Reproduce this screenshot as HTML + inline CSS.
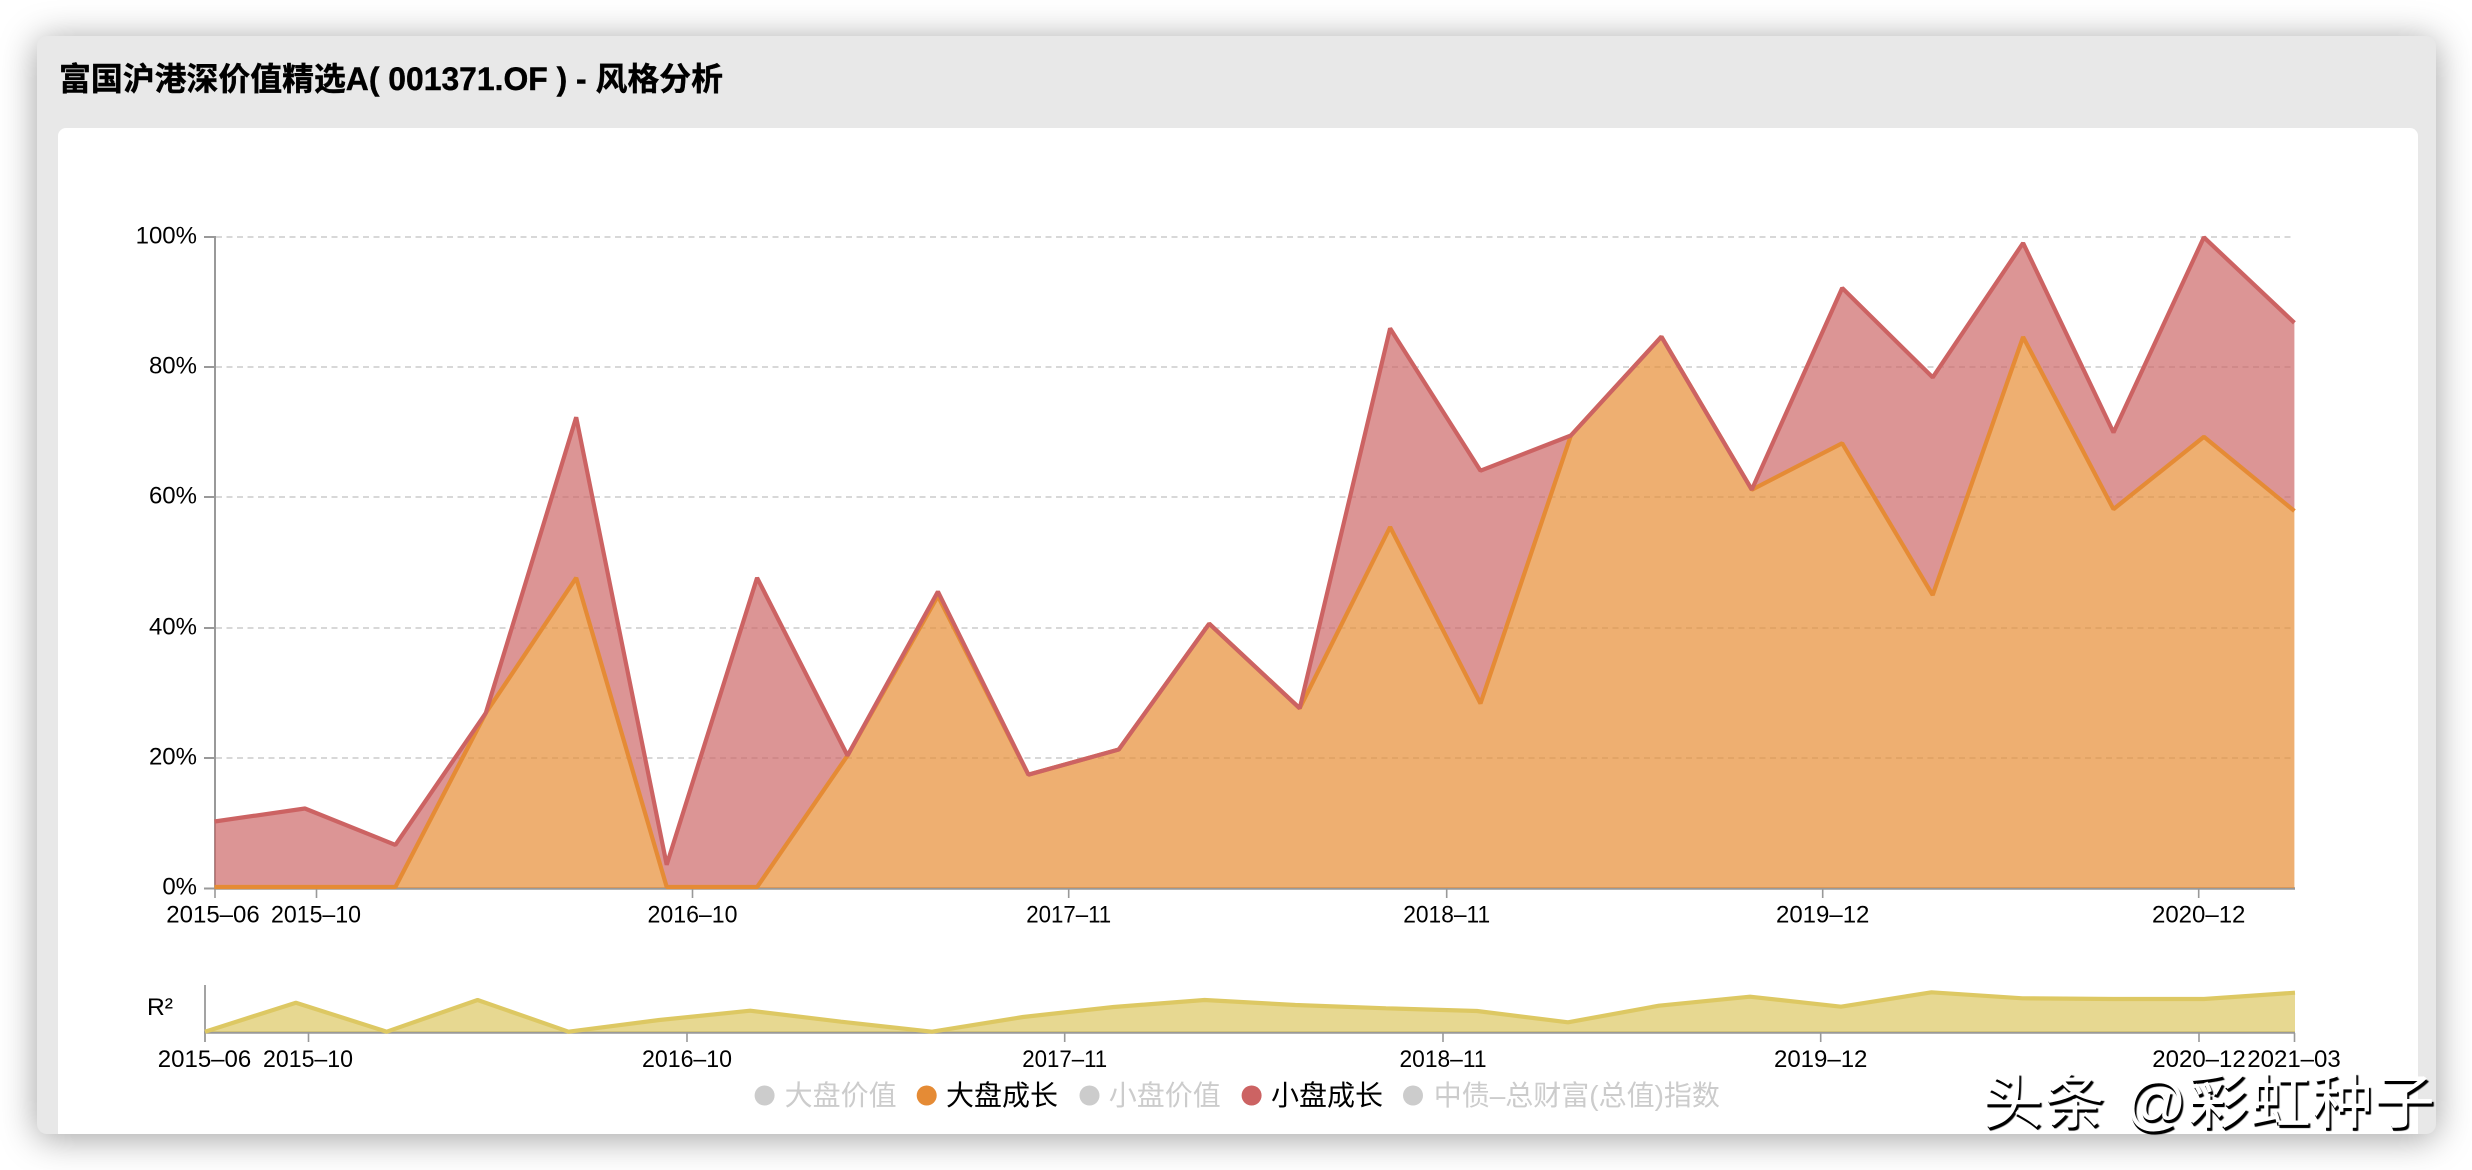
<!DOCTYPE html>
<html lang="zh">
<head>
<meta charset="utf-8">
<title>富国沪港深价值精选A( 001371.OF ) - 风格分析</title>
<style>
html,body{margin:0;padding:0;background:#fff;width:2472px;height:1170px;overflow:hidden}
#panel{position:absolute;left:36.5px;top:36px;width:2399.5px;height:1098px;background:#e8e8e8;border-radius:10px;box-shadow:0 4px 36px rgba(0,0,0,.38)}
#card{position:absolute;left:58px;top:128px;width:2360px;height:1006px;background:#fff;border-radius:8px 8px 0 0}
svg{position:absolute;left:0;top:0}
text{font-family:"Liberation Sans","Noto Sans CJK SC",sans-serif;white-space:pre}
.t{font-size:24px;fill:#000}
.m{text-anchor:middle}
.e{text-anchor:end}
.l{font-size:28px;font-family:"Liberation Sans","Noto Sans CJK SC",sans-serif}
#wm{position:absolute;left:1983px;top:1063px;font:400 60px/80px "Liberation Sans","Noto Sans CJK SC",sans-serif;letter-spacing:2px;color:#fff;text-shadow:2px 3px 1px #000,1px 3px 0 #000;white-space:pre}
</style>
</head>
<body>
<div id="panel"></div>
<div id="card"></div>
<svg width="2472" height="1170" viewBox="0 0 2472 1170">
  <text x="59" y="90" font-size="32" font-weight="700" fill="#000" stroke="#000" stroke-width=".4" textLength="664" lengthAdjust="spacingAndGlyphs">富国沪港深价值精选A( 001371.OF ) - 风格分析</text>

  <g stroke="#cccccc" stroke-width="1.5" stroke-dasharray="6 4.5" fill="none">
    <path d="M216 237H2294"/>
    <path d="M216 367H2294"/>
    <path d="M216 497H2294"/>
    <path d="M216 628H2294"/>
    <path d="M216 758H2294"/>
  </g>

  <g stroke="#999" fill="none">
    <path stroke-width="2" d="M215 236V889"/>
    <path stroke-width="2.5" d="M214 888.5H2295"/>
    <path stroke-width="2" d="M204 237H215M204 367H215M204 497H215M204 628H215M204 758H215M204 888.5H215"/>
    <path stroke-width="1.6" d="M215 889V898M316.5 889V898M692.5 889V898M1068.7 889V898M1446.7 889V898M1822.7 889V898M2198.7 889V898"/>
  </g>

  <polygon fill="#cc6363" fill-opacity=".68" points="214.5,821.5 304.9,808.5 395.4,844.9 485.8,713 576.2,417.3 666.7,864.8 757.1,577.8 847.5,755.6 937.9,591.6 1028.4,774.7 1118.8,749.5 1209.2,623.7 1299.7,708.3 1390.1,328.4 1480.5,470.7 1570.9,435.5 1661.4,336.7 1751.8,489.7 1842.2,288 1932.7,377.4 2023.1,243 2113.5,432.5 2203.9,237.3 2294.4,322.8 2294.4,511 2203.9,436.8 2113.5,509.2 2023.1,337 1932.7,595.1 1842.2,443.3 1751.8,489.7 1661.4,336.7 1570.9,435.5 1480.5,703.5 1390.1,527 1299.7,708.3 1209.2,623.7 1118.8,749.5 1028.4,774.7 937.9,596 847.5,755.6 757.1,887 666.7,887 576.2,577.8 485.8,713 395.4,887 304.9,887 214.5,887"/>
  <polygon fill="#e78d35" fill-opacity=".7" points="214.5,887 304.9,887 395.4,887 485.8,713 576.2,577.8 666.7,887 757.1,887 847.5,755.6 937.9,596 1028.4,774.7 1118.8,749.5 1209.2,623.7 1299.7,708.3 1390.1,527 1480.5,703.5 1570.9,435.5 1661.4,336.7 1751.8,489.7 1842.2,443.3 1932.7,595.1 2023.1,337 2113.5,509.2 2203.9,436.8 2294.4,511 2294.4,888 214.5,888"/>
  <polyline fill="none" stroke="#e58b35" stroke-width="4.2" stroke-linejoin="bevel" points="214.5,887 304.9,887 395.4,887 485.8,713 576.2,577.8 666.7,887 757.1,887 847.5,755.6 937.9,596 1028.4,774.7 1118.8,749.5 1209.2,623.7 1299.7,708.3 1390.1,527 1480.5,703.5 1570.9,435.5 1661.4,336.7 1751.8,489.7 1842.2,443.3 1932.7,595.1 2023.1,337 2113.5,509.2 2203.9,436.8 2294.4,511"/>
  <polyline fill="none" stroke="#cc6363" stroke-width="4.2" stroke-linejoin="bevel" points="214.5,821.5 304.9,808.5 395.4,844.9 485.8,713 576.2,417.3 666.7,864.8 757.1,577.8 847.5,755.6 937.9,591.6 1028.4,774.7 1118.8,749.5 1209.2,623.7 1299.7,708.3 1390.1,328.4 1480.5,470.7 1570.9,435.5 1661.4,336.7 1751.8,489.7 1842.2,288 1932.7,377.4 2023.1,243 2113.5,432.5 2203.9,237.3 2294.4,322.8"/>

  <g class="t">
    <text class="t e" x="197" y="243.5">100%</text>
    <text class="t e" x="197" y="373.5">80%</text>
    <text class="t e" x="197" y="503.5">60%</text>
    <text class="t e" x="197" y="634.5">40%</text>
    <text class="t e" x="197" y="764.5">20%</text>
    <text class="t e" x="197" y="894.5">0%</text>
    <text class="t m" x="213" y="922.7">2015–06</text>
    <text class="t m" x="316" y="922.7" textLength="90" lengthAdjust="spacingAndGlyphs">2015–10</text>
    <text class="t m" x="692.5" y="922.7" textLength="90" lengthAdjust="spacingAndGlyphs">2016–10</text>
    <text class="t m" x="1068.7" y="922.7" textLength="85" lengthAdjust="spacingAndGlyphs">2017–11</text>
    <text class="t m" x="1446.7" y="922.7" textLength="87" lengthAdjust="spacingAndGlyphs">2018–11</text>
    <text class="t m" x="1822.7" y="922.7">2019–12</text>
    <text class="t m" x="2198.7" y="922.7">2020–12</text>

    <text class="t e" x="173" y="1015" textLength="26" lengthAdjust="spacingAndGlyphs">R²</text>
    <text class="t m" x="204.5" y="1067">2015–06</text>
    <text class="t m" x="308" y="1067" textLength="90" lengthAdjust="spacingAndGlyphs">2015–10</text>
    <text class="t m" x="687" y="1067" textLength="90" lengthAdjust="spacingAndGlyphs">2016–10</text>
    <text class="t m" x="1064.7" y="1067" textLength="85" lengthAdjust="spacingAndGlyphs">2017–11</text>
    <text class="t m" x="1443" y="1067" textLength="87" lengthAdjust="spacingAndGlyphs">2018–11</text>
    <text class="t m" x="1820.7" y="1067">2019–12</text>
    <text class="t m" x="2199" y="1067">2020–12</text>
    <text class="t m" x="2294" y="1067">2021–03</text>
  </g>

  <g stroke="#999" fill="none">
    <path stroke-width="1.8" d="M205 985V1042"/>
    <path stroke-width="2.5" d="M204 1032.5H2295"/>
    <path stroke-width="1.6" d="M308.5 1033V1042M687 1033V1042M1064.7 1033V1042M1443 1033V1042M1820.7 1033V1042M2199 1033V1042M2294.5 1033V1042"/>
  </g>
  <polygon fill="#ddc863" fill-opacity=".7" points="205,1031.7 295.9,1002.7 386.7,1031.7 477.6,1000 568.5,1031.7 659.3,1020 750.2,1010.7 841,1021.7 932,1031.7 1023,1017 1113.7,1007 1204.6,1000 1295.4,1005 1386,1008.3 1477,1011 1568,1022.3 1659,1005.7 1750,996.7 1841,1006.7 1931.5,992.3 2022.4,998.3 2113,999 2204,999 2295,992.7 2295,1032 205,1032"/>
  <polyline fill="none" stroke="#ddc863" stroke-width="4.2" stroke-linejoin="bevel" points="205,1031.7 295.9,1002.7 386.7,1031.7 477.6,1000 568.5,1031.7 659.3,1020 750.2,1010.7 841,1021.7 932,1031.7 1023,1017 1113.7,1007 1204.6,1000 1295.4,1005 1386,1008.3 1477,1011 1568,1022.3 1659,1005.7 1750,996.7 1841,1006.7 1931.5,992.3 2022.4,998.3 2113,999 2204,999 2295,992.7"/>

  <circle cx="764.6" cy="1095.5" r="10" fill="#ccc"/>
  <text class="l" x="784.6" y="1105" font-size="28" fill="#ccc">大盘价值</text>
  <circle cx="926.7" cy="1095.5" r="10" fill="#e58b35"/>
  <text class="l" x="946" y="1105" font-size="28" fill="#000">大盘成长</text>
  <circle cx="1089.5" cy="1095.5" r="10" fill="#ccc"/>
  <text class="l" x="1108.8" y="1105" font-size="28" fill="#ccc">小盘价值</text>
  <circle cx="1251.6" cy="1095.5" r="10" fill="#cc6363"/>
  <text class="l" x="1271" y="1105" font-size="28" fill="#000">小盘成长</text>
  <circle cx="1413" cy="1095.5" r="10" fill="#ccc"/>
  <text class="l" x="1433.7" y="1105" font-size="28" fill="#ccc">中债–总财富(总值)指数</text>
</svg>
<div id="wm">头条 @彩虹种子</div>
</body>
</html>
